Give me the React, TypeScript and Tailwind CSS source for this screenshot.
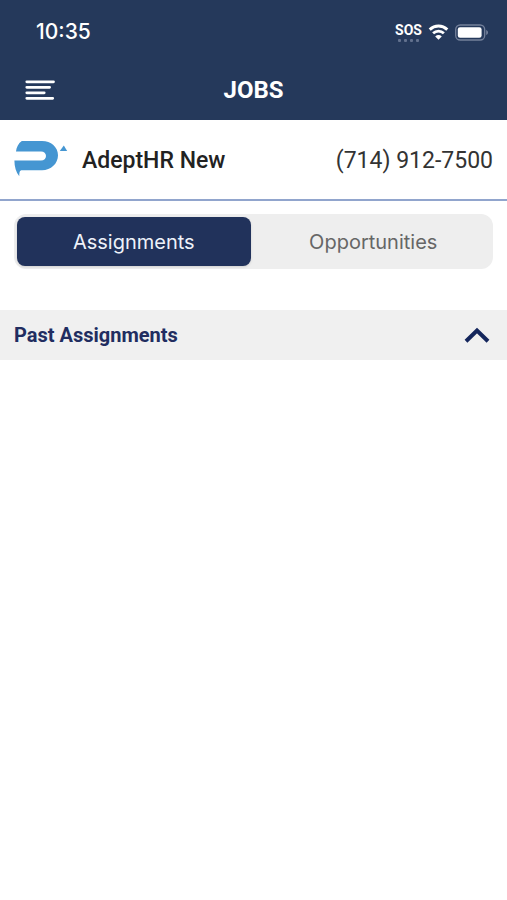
import React, { useState } from 'react';

type Tab = 'assignments' | 'opportunities';

const StatusBar: React.FC = () => (
    <div className="flex h-16 items-center justify-between pl-9 pr-[18px] text-white">
        <span className="font-['Inter',sans-serif] text-[21px] font-medium leading-8">10:35</span>
        <div className="flex items-center gap-1.5">
            <div className="flex flex-col items-center gap-px">
                <span className="text-sm font-bold leading-4">SOS</span>
                <svg width="22" height="3" viewBox="0 0 22 3" fill="#62718e" aria-hidden="true">
                    <rect x="0" width="3" height="3" rx="1" />
                    <rect x="6" width="3" height="3" rx="1" />
                    <rect x="12" width="3" height="3" rx="1" />
                    <rect x="18" width="3" height="3" rx="1" />
                </svg>
            </div>
            <svg width="21" height="16" viewBox="0 0 20 16" fill="none" aria-hidden="true">
                <path d="M1.2 5.6C6.2 0.9 13.8 0.9 18.8 5.6" stroke="white" strokeWidth="3" />
                <path d="M4.6 9.3C7.7 6.4 12.3 6.4 15.4 9.3" stroke="white" strokeWidth="2.8" />
                <path d="M10 15.8L6.7 12.4C8.7 10.5 11.3 10.5 13.3 12.4Z" fill="white" />
            </svg>
            <svg width="34" height="17" viewBox="0 0 34 17" fill="none" aria-hidden="true">
                <rect x="0.7" y="1" width="29" height="15" rx="4.5" stroke="#74819b" strokeWidth="1.3" />
                <rect x="2.8" y="3.2" width="23.8" height="10.6" rx="2.2" fill="white" />
                <path d="M31.2 6C33.6 6.8 33.6 10.2 31.2 11Z" fill="#74819b" />
            </svg>
        </div>
    </div>
);

const Logo: React.FC = () => (
    <svg width="54" height="42" viewBox="0 0 54 42" fill="#4596d2" aria-hidden="true">
        <path d="M7.8 1H28C37 1 44 7 44 15.3C44 23.6 37 30.3 28 30.3H8C6 30.3 5.2 31.8 5.3 36.3C2 32 0.4 26.5 0.4 20.4H27C30 20.4 32 18.5 32 15.9C32 13.3 30 11.4 27 11.4H2C2.4 7.4 4.2 3.5 7.8 1Z" />
        <path d="M49.8 5.6L53.2 11H45.8Z" />
    </svg>
);

const App: React.FC = () => {
    const [tab, setTab] = useState<Tab>('assignments');
    const [open, setOpen] = useState(true);

    const tabClass = (name: Tab) =>
        tab === name
            ? 'flex-1 rounded-lg bg-[#21325b] text-[#eef2fa] shadow-sm'
            : 'flex-1 rounded-lg text-[#666666]';

    return (
        <div className="min-h-screen bg-white font-['Roboto',sans-serif]">
            <header className="bg-[#25395b]">
                <StatusBar />
                <div className="grid h-14 grid-cols-[1fr_auto_1fr] items-center px-6 pb-1">
                    <button type="button" aria-label="Menu" className="justify-self-start">
                        <svg width="32" height="22" viewBox="0 0 32 22" stroke="white" strokeWidth="2.8" strokeLinecap="round" aria-hidden="true">
                            <path d="M2.8 2.8H29.5M2.8 8.3H25.6M2.8 13.8H20.2M2.8 19.3H28.7" />
                        </svg>
                    </button>
                    <h1 className="text-2xl font-bold text-white">JOBS</h1>
                </div>
            </header>

            <div className="flex h-[81px] items-center border-b-2 border-[#91a5cd] px-3.5 pt-0.5">
                <Logo />
                <span className="ml-3.5 text-[23px] font-medium leading-8 text-[#222222]">AdeptHR New</span>
                <a href="tel:7149127500" className="ml-auto text-[23px] leading-8 text-[#333333]">(714) 912-7500</a>
            </div>

            <main>
                <div role="tablist" className="mx-3.5 mt-[13px] flex h-[55px] gap-1.5 rounded-xl bg-[#eeeeee] p-[3px] font-['Inter',sans-serif] text-xl">
                    <button type="button" role="tab" aria-selected={tab === 'assignments'} className={tabClass('assignments')} onClick={() => setTab('assignments')}>
                        Assignments
                    </button>
                    <button type="button" role="tab" aria-selected={tab === 'opportunities'} className={tabClass('opportunities')} onClick={() => setTab('opportunities')}>
                        Opportunities
                    </button>
                </div>

                <button
                    type="button"
                    aria-expanded={open}
                    onClick={() => setOpen(!open)}
                    className="mt-[41px] flex h-[50px] w-full items-center justify-between bg-[#f0f0f0] pl-3.5 pr-4"
                >
                    <span className="text-xl font-bold text-[#212d60]">Past Assignments</span>
                    <svg width="28" height="18" viewBox="0 0 28 18" fill="none" stroke="#14265c" strokeWidth="4" className={open ? '' : 'rotate-180'} aria-hidden="true">
                        <path d="M3 15.2L14 4.6L25 15.2" />
                    </svg>
                </button>
            </main>
        </div>
    );
};

export default App;
